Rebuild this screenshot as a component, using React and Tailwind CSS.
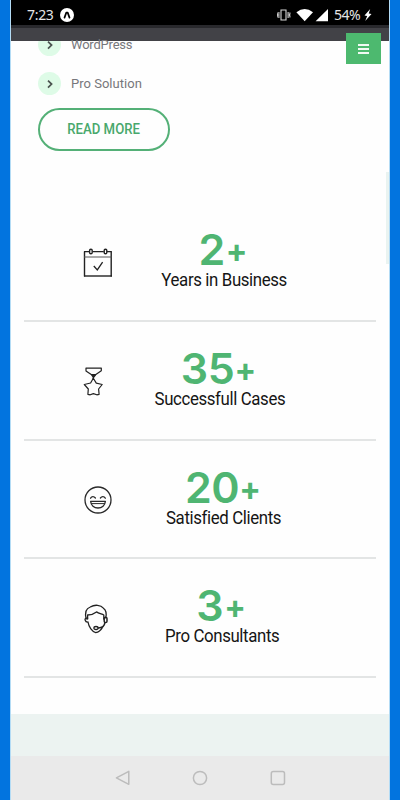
import clsx from 'clsx'

function ExpoIcon() {
  return (
    <svg width="14" height="14" viewBox="0 0 14 14">
      <circle cx="7" cy="7" r="7" fill="#fff" />
      <path d="M4.5 9.6 6.3 4.6h1.4l1.8 5" fill="none" stroke="#000" strokeWidth="1.7" strokeLinecap="round" strokeLinejoin="round" />
    </svg>
  )
}

function StatusIcons() {
  return (
    <svg width="54" height="16" viewBox="0 0 54 16">
      {/* Vibrate */}
      <g fill="none" stroke="#d6d6d6" strokeWidth="1.1">
        <path d="M4 3h5v10H4z" />
        <path d="M1.9 5v6M11.1 5v6M.2 5.4v1.7l.5.9-.5.9v1.7M12.9 5.4v1.7l-.5.9.5.9v1.7" />
      </g>
      {/* Wifi */}
      <path d="M19.4 5.3Q27.7-1.2 36 5.3L27.7 14.2z" fill="#fff" />
      {/* Signal */}
      <path d="M51 2v12.3H38.6z" fill="#fff" />
    </svg>
  )
}

function BoltIcon() {
  return (
    <svg width="8" height="12" viewBox="0 0 8 12">
      <path d="M6.2 0 .5 6.6l2.7.3L1.2 12l6.3-7.1-2.8-.4z" fill="#fff" />
    </svg>
  )
}

function CalendarIcon() {
  return (
    <svg width="30" height="30" viewBox="0 0 30 30" fill="none" stroke="#222">
      <path d="M1.5 3.4v25M28.2 3.4v25" strokeWidth="1.4" />
      <path d="M1 28h28" strokeWidth="1.4" />
      <path d="M1 3.6h5.4M9.6 3.6h11.2M24 3.6h4.8" strokeWidth="1.1" />
      <path d="M1 9h27.5" strokeWidth="1" stroke="#555" />
      <rect x="6.6" y="1.3" width="2.6" height="4.5" rx="1.2" strokeWidth="1.4" />
      <rect x="21.2" y="1.3" width="2.6" height="4.5" rx="1.2" strokeWidth="1.4" />
      <path d="m10.8 18 3.5 3.9 5.3-7.8" strokeWidth="1.3" />
    </svg>
  )
}

function MedalIcon() {
  return (
    <svg width="30" height="30" viewBox="0 0 30 30" fill="none" stroke="#222" strokeWidth="1.2" strokeLinejoin="round">
      <path d="M3 1.1h15.3v2.6l-5.8 4H8.6L3 3.9z" />
      <path d="m8.7 7.8 1.8 2.6 2-2.6M8.9 7.7h3.6M10.4 8.3l-.1 3.6" strokeWidth="1.5" />
      <path d="m10.3 11.2 3 4.9 5.9 1.4-3.6 4.5.5 5.4-2.3.4-3.4-1.2-3.2 1.2-2.3-.4.4-5.4-4-4.5 6.3-1.5z" />
    </svg>
  )
}

function SmileIcon() {
  return (
    <svg width="30" height="30" viewBox="0 0 30 30" fill="none" stroke="#2a2a2a" strokeWidth="1.3" strokeLinecap="round" strokeLinejoin="round">
      <circle cx="15" cy="14" r="13" />
      <path d="M7.6 12.2c1.2-2 3.3-2 4.8-.2M17.4 12c1.5-1.8 3.6-1.8 4.9.2" />
      <path d="M7.6 15.3h14.8c-.3 4-3.5 6.7-7.4 6.7s-7.1-2.7-7.4-6.7z" />
      <path d="M8.6 17.6h12.8" strokeWidth="1" />
    </svg>
  )
}

function ConsultantIcon() {
  return (
    <svg width="30" height="30" viewBox="0 0 30 30" fill="none" stroke="#222" strokeWidth="1.3" strokeLinecap="round" strokeLinejoin="round">
      <path d="M3.2 15C1.6 8.2 3.5 4.2 7.3 3 11.8.2 17.8.9 20.4 4.2c2.9 2.1 3.2 6 2.3 9.6" />
      <path d="M4.6 15V11c3.3-.2 6.3-1 8.9-3.1 2 1.4 4.8 2 7.3 3.1v4" />
      <path d="M4.6 14.2c-2.4-.5-2.9.8-2.4 2 .4 1.4 1.5 2 2.8 1.8.8 5.1 4.2 9.8 7.7 10.6 2.9-.5 5.1-2.3 6.6-5" />
      <rect x="21.2" y="13.2" width="2.8" height="5.4" rx="1.4" strokeWidth="1.5" />
      <path d="M21.9 18.7c-.4 3.3-3 5.2-6.6 5.2" strokeWidth="1.5" />
      <ellipse cx="13" cy="24" rx="2.1" ry="1.5" />
    </svg>
  )
}

const services = [
  { name: 'WordPress', text: 'tracking-[-0.2px]' },
  { name: 'Pro Solution', text: 'tracking-[0.02px]' },
]

const stats = [
  { value: '2', label: 'Years in Business', Icon: CalendarIcon, offset: 'pr-[25px]', gap: 'ml-[1px]' },
  { value: '35', label: 'Successfull Cases', Icon: MedalIcon, offset: 'pr-[34px]', gap: 'ml-0' },
  { value: '20', label: 'Satisfied Clients', Icon: SmileIcon, offset: 'pr-[25px]', gap: 'ml-0' },
  { value: '3', label: 'Pro Consultants', Icon: ConsultantIcon, offset: 'pr-[29px]', gap: 'ml-[1px]' },
]

function StatusBar() {
  return (
    <header className="flex h-[25px] flex-shrink-0 items-center bg-black pt-[4px] pl-4 pr-[17px] font-['Noto_Sans',sans-serif] text-[14px] text-[#e5e5e5]">
      <span className="w-[33px] tracking-[-0.3px]">7:23</span>
      <ExpoIcon />
      <span className="ml-auto flex items-center">
        <StatusIcons />
        <span className="ml-[3px] w-[30px] text-[14px] tracking-[-0.5px]">54%</span>
        <BoltIcon />
      </span>
    </header>
  )
}

function ServiceItem({ name, text }) {
  return (
    <li className="flex h-[39px] items-center gap-[10px]">
      <span className="flex h-[23px] w-[23px] items-center justify-center rounded-full bg-[#defbe7]">
        <svg width="8" height="10" viewBox="0 0 8 10">
          <path d="m2 1.6 3.6 3.5L2 8.6" fill="none" stroke="#4b5450" strokeWidth="1.7" />
        </svg>
      </span>
      <span className={clsx('relative z-20 text-[13px] text-[#77777b]', text)}>{name}</span>
    </li>
  )
}

function StatRow({ value, label, Icon, offset, gap }) {
  return (
    <div className="flex h-[118.75px] border-b-2 border-[#e3e5e5]">
      <div className="w-[89px] flex-shrink-0 pt-[45px] pl-[59px]">
        <Icon />
      </div>
      <div className={clsx('flex flex-1 flex-col items-center pt-7', offset)}>
        <div className="mr-[18px] flex h-[37px] items-center text-[#4fb572] font-['Inter',sans-serif]">
          <span className="text-[43px] font-semibold leading-[37px] tracking-[-0.4px]">{value}</span>
          <span className={clsx('pt-[2px] text-[32px] font-bold leading-[37px]', gap)}>+</span>
        </div>
        <span className="mt-[2px] mr-4 origin-center scale-x-[0.935] text-[18px] leading-[20px] tracking-[-0.4px] whitespace-nowrap text-[#151515]">
          {label}
        </span>
      </div>
    </div>
  )
}

export default function App() {
  return (
    <div className="h-[800px] w-[400px] overflow-hidden bg-[#0274df] px-[10px] font-['Roboto',sans-serif]">
      <div className="relative flex h-full flex-col border-x border-[#b4dcf5] bg-[#fefefe]">
        <StatusBar />
        <div className="relative z-10 h-4 flex-shrink-0 border-t-[3px] border-[#29292d] bg-[#424247]" />

        {/* Services */}
        <section className="h-[162px] flex-shrink-0 pl-[27px]">
          <ul className="-mt-[16px]">
            {services.map((service) => (
              <ServiceItem key={service.name} {...service} />
            ))}
          </ul>
          <button className="mt-[5px] h-[43px] w-[132px] rounded-full border-2 border-[#54b077] text-[14px] font-medium text-[#48a86c]">
            <span className="inline-block scale-x-[0.94]">READ MORE</span>
          </button>
        </section>

        {/* Stats */}
        <section className="h-[511px] flex-shrink-0 px-[13px]">
          {stats.map((stat) => (
            <StatRow key={stat.label} {...stat} />
          ))}
        </section>

        <div className="h-[42px] flex-shrink-0 bg-[#ecf3f1]" />
        <nav className="flex flex-1 items-center justify-center bg-[#eaeaea]">
          <svg width="172" height="18" viewBox="0 0 172 18" fill="none" stroke="#bcbcbc" strokeWidth="1.5" strokeLinejoin="round">
            <path d="M14.8 2.3v13L2.4 8.9z" />
            <circle cx="86" cy="9" r="6.6" />
            <rect x="157.3" y="2.4" width="13.2" height="13.2" rx="2" />
          </svg>
        </nav>

        {/* Floating menu button */}
        <button className="absolute top-[33px] right-2 z-20 flex h-[31px] w-[35px] flex-col items-center justify-center gap-[2px] bg-[#4db96f]">
          <span className="h-[2px] w-[11px] bg-[#f0faf3]" />
          <span className="h-[2px] w-[11px] bg-[#f0faf3]" />
          <span className="h-[2px] w-[11px] bg-[#f0faf3]" />
        </button>

        {/* Scroll thumb */}
        <div className="absolute top-[172px] right-0 h-[92px] w-[3px] bg-[#e9f3f1]" />
      </div>
    </div>
  )
}
